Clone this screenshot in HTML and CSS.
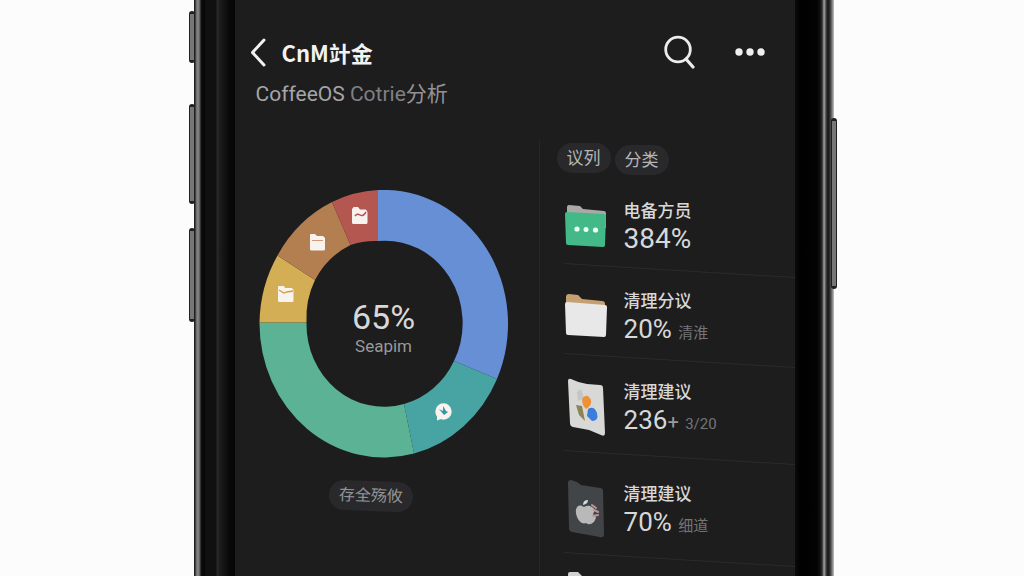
FILE: index.html
```html
<!DOCTYPE html>
<html lang="zh-CN">
<head>
<meta charset="utf-8">
<meta name="viewport" content="width=device-width, initial-scale=1">
<title>CoffeeOS</title>
<link rel="stylesheet" href="styles.css">
</head>
<body>
<div class="phone">
  <div class="bezel bezel-left">
    <span class="key key-mute"></span>
    <span class="key key-up"></span>
    <span class="key key-down"></span>
  </div>
  <div class="screen">
    <header class="topbar">
      <div class="title-row">
        <button class="icon-button" type="button" aria-label="返回">
          <svg width="18" height="30" viewBox="0 0 18 30"><path d="M15 3 3.500 15.500 15 28" fill="none" stroke="#f2f2f2" stroke-width="3" stroke-linecap="round" stroke-linejoin="round"/></svg>
        </button>
        <h1 class="title">CnM竍金</h1>
        <button class="icon-button search" type="button" aria-label="搜索">
          <svg width="32" height="34" viewBox="0 0 32 34"><circle cx="14" cy="14.500" r="12.300" fill="none" stroke="#ececec" stroke-width="2.800"/><path d="M22 24 29 32" stroke="#ececec" stroke-width="3.200" stroke-linecap="round"/></svg>
        </button>
        <button class="icon-button" type="button" aria-label="更多">
          <svg width="30" height="10" viewBox="0 0 30 10" fill="#efeff2"><circle cx="4" cy="5" r="3.700"/><circle cx="15" cy="5" r="3.700"/><circle cx="26" cy="5" r="3.700"/></svg>
        </button>
      </div>
      <p class="subtitle">CoffeeOS <span class="dim">Cotrie</span><span class="tail">分析</span></p>
    </header>
    <main class="content">
      <section class="usage">
        <div class="donut">
          <svg class="ring" width="250" height="268" viewBox="259 190 250 268" aria-hidden="true">
            <path fill="#668fd5" d="M378 190A124.500 134 0 0 1 497 379L454 361A77.500 82.500 0 0 0 378 241Z"/>
            <path fill="#48a3a3" d="M497 379A124.500 134 0 0 1 414 453.500L404 404A77.500 82.500 0 0 0 454 361Z"/>
            <path fill="#5cb294" d="M414 453.500A124.500 134 0 0 1 259.500 322.500H306.500A77.500 82.500 0 0 0 404 404Z"/>
            <path fill="#d3ae55" d="M259.500 322.500A124.500 134 0 0 1 277.500 255.500L315 280A77.500 82.500 0 0 0 306.500 322.500Z"/>
            <path fill="#b37e50" d="M277.500 255.500A124.500 134 0 0 1 332 202L350.500 245A77.500 82.500 0 0 0 315 280Z"/>
            <path fill="#b45750" d="M332 202A124.500 134 0 0 1 378 190V241A77.500 82.500 0 0 0 350.500 245Z"/>
            <g fill="#f8f3ee">
              <path d="M353 208Q353 207 354 207H358L360 209.500H366L367.500 212V222.500Q367.500 224 366 224H353.500Q352 224 352 222.500V209Z"/>
              <path d="M310 235Q310 234 311 234H315L317 236H323L325 238V249Q325 250.500 323.500 250.500H311.500Q310 250.500 310 249Z"/>
              <path d="M278 287Q278 286 279 286H284L285 288H292L293.500 290V300.500Q293.500 302 292 302H279.500Q278 302 278 300.500Z"/>
              <circle cx="443.500" cy="411.500" r="8.200"/>
              <path d="M437 415V420.500L444 418Z"/>
            </g>
            <path d="M355 216Q357 213 360 215T366 212" fill="none" stroke="#bd514e" stroke-width="1.500"/>
            <path d="M312 240.500H323" stroke="#d49a78"/>
            <path d="M279 290 284 293 287 292 293 291" fill="none" stroke="#d0a03c" stroke-width="1.300"/>
            <path d="M439 409 443 411 443 406 446 411 448 412 444 415Z" fill="#3795a5"/>
          </svg>
          <div class="donut-label">
            <strong class="donut-value">65%</strong>
            <span class="donut-caption">Seapim</span>
          </div>
        </div>
        <button class="pill pill-wide" type="button">存全殇攸</button>
      </section>
      <section class="details">
        <nav class="filters">
          <button class="pill" type="button">议列</button>
          <button class="pill pill-low" type="button">分类</button>
        </nav>
        <ul class="list">
          <li class="row">
            <svg class="row-icon" width="44" height="44" viewBox="0 0 44 44"><path d="M3 3Q3 1 5 1L16 2 19 5 40 7Q42 7 42 10V24H3Z" fill="#aaa9a6"/><path d="M1 10Q1 8 3 8L40 10Q42 10 42 12L41 41Q41 43 39 43L4 41Q2 41 2 39Z" fill="#43b987"/><g fill="#e9fff6"><circle cx="13" cy="25" r="2.600"/><circle cx="22" cy="25.500" r="2.500"/><circle cx="31.500" cy="26" r="2.600"/></g></svg>
            <div class="row-text"><span class="row-name">电备方员</span><span class="row-value row-value-lead">384%</span></div>
          </li>
          <li class="row">
            <svg class="row-icon" width="44" height="44" viewBox="0 0 44 44"><path d="M2 3Q2 0 5 0L14 1 18 5 38 7Q41 7 41 10V15H2Z" fill="#c6a071"/><path d="M1 10Q1 8 3 8L41 11Q43 11 43 13L42 41Q42 43 40 43L4 41Q2 41 2 39Z" fill="#e8e8e8"/></svg>
            <div class="row-text"><span class="row-name">清理分议</span><span class="row-value">20% <small class="note">清淮</small></span></div>
          </li>
          <li class="row row-mid">
            <svg class="row-icon" width="44" height="58" viewBox="0 0 44 58"><path d="M4 3Q4 0 7 1Q15 5 23 6L36 7Q39 7 39 10L41 55Q41 59 37 57L25 52 9 49Q6 48 6 45Z" fill="#d8d8d6"/><path d="M13 14 17 11 20 20 14 23Z" fill="#c2c6c7"/><path d="M18 21Q23 14 27 22Q28 28 22 31Q18 27 18 21Z" fill="#ed9139"/><path d="M12 27 18 28 21 43 15 37Z" fill="#8c8454"/><path d="M24 31Q30 27 33 35Q35 43 28 43L23 38Z" fill="#3b7ddd"/></svg>
            <div class="row-text"><span class="row-name">清理建议</span><span class="row-value">236<small class="plus">+</small> <small class="note">3/20</small></span></div>
          </li>
          <li class="row row-tall">
            <svg class="row-icon" width="44" height="58" viewBox="0 0 44 58"><path d="M4 3Q4 0 7 0L13 2 17 5 36 8Q39 8 39 11L40 54Q40 58 36 57L8 52Q5 51 5 48Z" fill="#424547"/><path d="M20 27C15 23 11 27 12 33C13 40 18 45 22 43C26 46 31 43 32 37L29 34 31 30C27 25 24 25 20 27Z" fill="#b9b9b9"/><path d="M19 25Q19 20 24 20Q24 24 19 25Z" fill="#c6dfe5"/><path d="M28 25 32 28M30 30 34 32M29 36 34 35" stroke="#bd929a" stroke-width="2" stroke-linecap="round"/></svg>
            <div class="row-text"><span class="row-name">清理建议</span><span class="row-value">70% <small class="note">细道</small></span></div>
          </li>
          <li class="row row-last">
            <svg class="row-icon" width="44" height="44" viewBox="0 0 44 44"><path d="M4 2Q4 0 6 0L14 0 18 4 39 7 40 43 6 40Z" fill="#d2d2d2"/></svg>
          </li>
        </ul>
      </section>
    </main>
  </div>
  <div class="bezel bezel-right"><span class="key key-power"></span></div>
</div>
</body>
</html>
```
FILE: styles.css
```css
* { box-sizing: border-box; }
body {
  margin: 0;
  background: #fcfcfc;
  color: #d8d8d8;
  font-family: Roboto, "Noto Sans CJK SC", sans-serif;
}
button { border: 0; font: inherit; color: inherit; }
.phone {
  display: grid;
  grid-template-columns: 41px 1fr 39px;
  width: 62.5%;
  height: 100vh;
  margin-left: 18.9%;
}
.bezel { position: relative; }
.bezel-left {
  background: linear-gradient(90deg, #202020 0 1px, #666 2px, #8b8b8b 4px, #555 6px, #101010 7px, #050505 10px, #101010 12px 22px, #292929 23px, #1b1b1b 26px, #080808 36px, #050505 41px);
}
.bezel-right {
  background: linear-gradient(90deg, #0b0b0b 0, #010101 5px, #030303 22px, #161616 26px, #555 28px, #aaa 29px, #444 31px, #151515 33px, #333 35px, #777 37px, #c5c5c5 39px);
}
.key {
  position: absolute;
  width: 6px;
  border: solid #202020;
  border-width: 3px 1px;
  border-radius: 3px;
  background: #777;
}
.bezel-left .key { left: -5px; }
.key-mute { top: 11px; height: 52px; }
.key-up { top: 104px; height: 100px; }
.key-down { top: 228px; height: 94px; }
.bezel-right .key { top: 118px; right: -3px; height: 171px; }
.screen {
  display: flex;
  flex-direction: column;
  min-width: 0;
  overflow: hidden;
  background: #1d1d1e;
}
.topbar { padding: 34px 30px 0 14px; }
.title-row { display: flex; align-items: center; height: 36px; }
.icon-button { display: flex; padding: 0; background: none; }
.search { margin: 0 39px 0 auto; }
.title { margin: 0 0 0 15px; color: #f2f2f2; font: 700 22px/36px "Noto Sans CJK SC", sans-serif; }
.subtitle { margin: 10px 0 0 7px; color: #a5a5a8; font-size: 21px; line-height: 28px; }
.dim { color: #808084; }
.tail { color: #939396; }
.content { display: grid; grid-template-columns: 304fr 256fr; flex: 1; margin-top: 32px; }
.usage { display: flex; flex-direction: column; align-items: center; padding: 50px 6px 0 0; }
.donut { display: grid; place-items: center; }
.ring, .donut-label { grid-area: 1 / 1; }
.donut-label { display: flex; flex-direction: column; align-items: center; padding-top: 10px; }
.donut-value { font-size: 34px; font-weight: 400; line-height: 34px; }
.donut-caption { color: #99999b; font-size: 17px; line-height: 24px; }
.pill {
  height: 30px;
  padding: 0 10px;
  border-radius: 15px;
  background: #29292b;
  color: #b5b5b6;
  font-size: 17px;
  line-height: 30px;
}
.pill-wide { margin: 23px 26px 0 0; color: #949496; font-size: 16px; transform: rotate(2deg); }
.details { border-left: 1px solid #262627; }
.filters { display: flex; gap: 4px; padding: 3px 0 0 17px; }
.pill-low { margin-top: 2px; }
.list { margin: 0; padding: 6px 0 0 24px; list-style: none; }
.row { position: relative; display: flex; align-items: center; gap: 16px; padding: 17px 0; }
.row::after {
  content: "";
  position: absolute;
  right: 0;
  bottom: 0;
  left: 0;
  height: 1px;
  background: #2b2b2c;
  transform: skewY(3.5deg);
}
.row-mid { padding-bottom: 22px; }
.row-tall { padding: 22px 0; }
.row-last { padding-top: 12px; }
.row-icon { flex: none; }
.row-text { display: flex; flex-direction: column; }
.row-name { font-size: 17px; font-weight: 500; line-height: 26px; white-space: nowrap; }
.row-value { font-size: 26px; line-height: 30px; white-space: nowrap; }
.row-value-lead { font-size: 28px; }
.note { color: #747477; font-size: 15px; line-height: 15px; }
.plus { color: #9a9a9c; font-size: 20px; line-height: 20px; }
```
